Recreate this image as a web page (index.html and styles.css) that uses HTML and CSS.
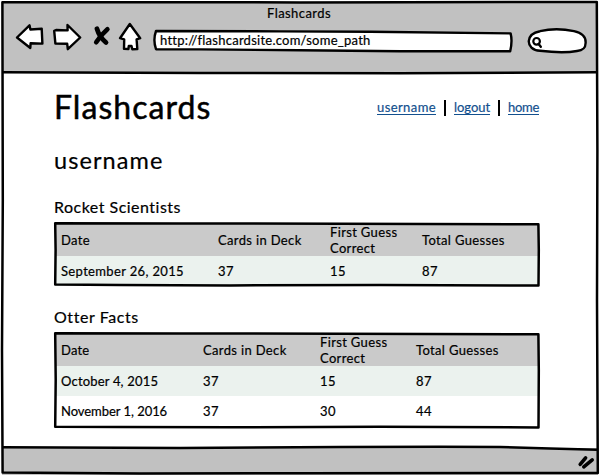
FILE: index.html
```
<!DOCTYPE html>
<html lang="en">
<head>
<meta charset="utf-8">
<title>Flashcards</title>
<link rel="stylesheet" href="styles.css">
</head>
<body>
<div class="window">
  <header class="chrome">
    <div class="window-title">Flashcards</div>
    <div class="toolbar">
      <svg class="nav-icons" width="130" height="34" viewBox="14 20 130 34">
        <g fill="#fff" stroke="#000" stroke-width="2.4" stroke-linejoin="round" stroke-linecap="round">
          <path d="M17 37.5L29.5 25.3L30.4 29.5L41.7 28.7L42.4 43.6L30.6 43.3L30.3 48Z"/>
          <path d="M54.2 30.8L56.5 30L67.6 30.4L67.5 25L80.2 37.5L67.8 49.2L67.2 43.8L55.4 43.6Z"/>
          <path d="M129.8 24L140.2 38.2L136.6 39.4L137.3 49L132.3 49.2L131.5 46L128.8 46L128.4 49L124 48.8L124.2 39.4L120 38.2Z"/>
        </g>
        <g stroke="#000" stroke-linecap="round" fill="none">
          <path stroke-width="4.8" d="M97 28.8C98.5 34 102 39 106 42.5"/>
          <path stroke-width="4.6" d="M107.4 29.2C103 33 99 38 96.2 42.3"/>
        </g>
      </svg>
      <div class="address">
        <svg class="sketch" width="362" height="24" viewBox="152 29 362 24">
          <path fill="#fff" stroke="#000" stroke-width="2.4" stroke-linejoin="round" d="M156 31L280 31.4L370 31.8L510.6 33.4Q512.6 41 510.2 51.3L400 51.2L300 50.2L200 49.4L156 49.2Q152.8 40 156 31Z"/>
        </svg>
        <span class="url">http://flashcardsite.com/some_path</span>
      </div>
      <svg class="search" width="62" height="28" viewBox="526 27 62 28">
        <path fill="#fff" stroke="#000" stroke-width="2.4" d="M540 31.2C550 28.8 564 29 574 31.2C583 33.2 586 37.5 585.6 43C585.5 48 583.5 50.3 577 51C566 53 552 52.2 540 50.8C532.5 50.3 528.5 46 528.8 41C529.2 36 533 32.5 540 31.2Z"/>
        <circle cx="536.6" cy="41.3" r="3.3" fill="none" stroke="#000" stroke-width="2.2"/>
        <path d="M538.6 44L540.8 46.8" stroke="#000" stroke-width="2.4" stroke-linecap="round"/>
      </svg>
    </div>
  </header>

  <main class="page">
    <div class="masthead">
      <h1>Flashcards</h1>
      <nav class="links">
        <a class="link-user" href="#">username</a>
        <a class="link-logout" href="#">logout</a>
        <a class="link-home" href="#">home</a>
      </nav>
    </div>
    <h2>username</h2>

    <section class="deck">
      <h3>Rocket Scientists</h3>
      <div class="table rocket">
        <div class="row head"><span>Date</span><span>Cards in Deck</span><span>First Guess<br>Correct</span><span>Total Guesses</span></div>
        <div class="row tint"><span>September 26, 2015</span><span>37</span><span>15</span><span>87</span></div>
        <svg class="frame" width="488" height="68" viewBox="53 220 488 68" fill="none" stroke="#000" stroke-width="2.5" stroke-linejoin="round">
          <path d="M55.2 223.2L180 223.4L340 223.8L538.4 224.2L538.8 250L538.5 285.6L380 285L230 285.4L120 285L55.2 284.6L55.6 250Z"/>
        </svg>
      </div>
    </section>

    <section class="deck">
      <h3 class="otter-title">Otter Facts</h3>
      <div class="table otter">
        <div class="row head"><span class="date">Date</span><span>Cards in Deck</span><span>First Guess<br>Correct</span><span>Total Guesses</span></div>
        <div class="row tint"><span class="oct">October 4, 2015</span><span>37</span><span>15</span><span>87</span></div>
        <div class="row"><span class="nov">November 1, 2016</span><span>37</span><span>30</span><span>44</span></div>
        <svg class="frame" width="488" height="100" viewBox="53 330 488 100" fill="none" stroke="#000" stroke-width="2.5" stroke-linejoin="round">
          <path d="M55.2 333.2L180 333.4L340 333.8L538.4 334.2L538.8 370L538.5 427.4L380 426.8L230 427.2L120 427L55.2 426.8L55.7 380Z"/>
        </svg>
      </div>
    </section>
  </main>

  <footer class="statusbar"></footer>

  <svg class="outline" width="600" height="475" viewBox="0 0 600 475" fill="none" stroke="#000" stroke-linejoin="round">
    <path stroke-width="2.5" d="M2.4 2.2L300 2.4L596.8 2L597.4 150L597 300L597.8 473L300 473.2L140 473.4L2.6 472.4L2 350L2.8 200Z"/>
    <path stroke-width="2.5" d="M2.5 72.3L200 73L400 73.2L597 72.3"/>
    <path stroke-width="2.5" d="M2.5 447.2L180 448L340 447L440 446.8L500 446.9L550 448.4L597 449.7"/>
    <path stroke-width="3.6" stroke-linecap="round" d="M580.2 464.3L585.6 457.8M583.8 466.8L592.2 459.8"/>
  </svg>
</div>
</body>
</html>
```

FILE: styles.css
```
* { box-sizing: border-box; }

body {
  margin: 0;
  font: 13px/16px Lato, "Open Sans", sans-serif;
  letter-spacing: 0.35px;
  color: #000;
  -webkit-text-stroke: 0.2px currentColor;
}

.window {
  position: relative;
  display: flex;
  flex-direction: column;
  width: 600px;
  height: 475px;
  background: #fff;
  overflow: hidden;
}

.chrome {
  height: 71px;
  margin: 2px 2px 0;
  padding-top: 3px;
  background: #c1c1c1;
}

.window-title {
  margin-left: -2px;
  text-align: center;
  letter-spacing: 0.43px;
}

.toolbar {
  display: flex;
  align-items: flex-start;
  padding-left: 12px;
}

.nav-icons { flex: none; margin-top: -1px; }

.address {
  position: relative;
  flex: none;
  width: 362px;
  height: 24px;
  margin: 8px 12px 0 8px;
  padding: 3px 0 0 8px;
}

.sketch { position: absolute; left: 0; top: 0; }

.url { position: relative; display: block; letter-spacing: 0.25px; }

.search { flex: none; margin-top: 6px; }

.page {
  flex: 1;
  padding: 13px 61px 0 54px;
}

.masthead {
  display: flex;
  justify-content: space-between;
  align-items: center;
  height: 41px;
}

h1, h2, h3 { margin: 0; font-weight: 400; }

h1 { font-size: 32px; line-height: 40px; letter-spacing: 1.05px; -webkit-text-stroke-width: 0.5px; }
h2 { margin-top: 18px; font-size: 23.5px; line-height: 30px; letter-spacing: 1.08px; -webkit-text-stroke-width: 0.2px; }
h3 { font-size: 16px; line-height: 20px; letter-spacing: 0.49px; }
.otter-title { letter-spacing: 0.58px; }

.links { display: flex; }
.links a {
  height: 15px;
  margin-top: 1px;
  line-height: 14px;
  color: #13508e;
  text-decoration: none;
  border-bottom: 1px solid #13508e;
}
.links a + a { margin-left: 18px; position: relative; }
.links a + a::before {
  content: "";
  position: absolute;
  left: -10px;
  top: 0;
  width: 2px;
  height: 16px;
  background: #000;
}
.link-user { width: 59px; letter-spacing: 0.41px; }
.link-logout { width: 36px; letter-spacing: -0.03px; }
.link-home { width: 31px; letter-spacing: -0.28px; }

.deck { margin-top: 22px; }
.deck + .deck { margin-top: 21px; }

.table {
  position: relative;
  width: 485px;
  margin-top: 5px;
  padding: 2px 1px 0;
}
.row { display: grid; align-items: center; height: 30px; padding-left: 6px; }
.rocket .row { grid-template-columns: 157px 112px 92px 1fr; }
.otter .row { grid-template-columns: 142px 117px 96px 1fr; }
.row.head { height: 32px; background: #cacaca; }
.row.tint { background: #ebf2ee; }
.date, .oct { letter-spacing: 0.18px; }
.nov { letter-spacing: -0.05px; }
.frame { position: absolute; left: -1px; top: -2px; }

.statusbar { height: 27px; margin: 0 2px; background: #c1c1c1; }

.outline { position: absolute; left: 0; top: 0; }
```
